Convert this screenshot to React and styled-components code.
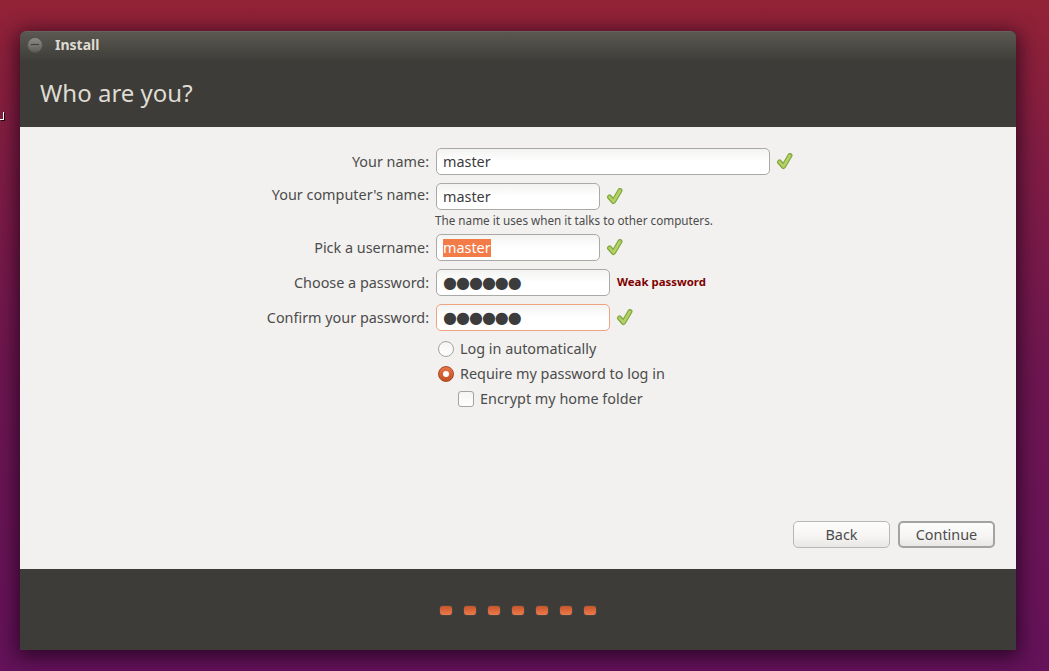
import React from "react";
import styled, { createGlobalStyle } from "styled-components";

const Global = createGlobalStyle`
  html, body { margin: 0; padding: 0; height: 100%; }
  body { font-family: "Noto Sans", "Open Sans", sans-serif; overflow: hidden; }
  * { box-sizing: border-box; }
`;

const Desktop = styled.div`
  position: relative;
  width: 1049px;
  height: 671px;
  padding: 31px 33px 21px 20px;
  background: linear-gradient(180deg, #922236 0%, #7f1c44 25%, #6e1650 55%, #64125a 100%);
`;

const DesktopMark = styled.span`
  position: absolute;
  left: 0;
  top: 112px;
  width: 4px;
  height: 8px;
  border-right: 1px solid #fff;
  border-bottom: 1px solid #fff;
  box-shadow: 1px 1px 0 rgba(0, 0, 0, 0.8);
`;

const Window = styled.div`
  display: flex;
  flex-direction: column;
  height: 619px;
  border-radius: 6px 6px 0 0;
  overflow: hidden;
  box-shadow: 0 4px 20px 3px rgba(20, 0, 20, 0.7);
  background: #3d3c38;
`;

const TitleBar = styled.div`
  display: flex;
  align-items: center;
  gap: 12px;
  height: 29px;
  flex: none;
  padding: 0 0 3px 7px;
  background: linear-gradient(180deg, #5a5850 0%, #3f3e3a 100%);
  border-top: 1px solid #65635b;
`;

const CloseButton = styled.span`
  display: flex;
  align-items: center;
  justify-content: center;
  width: 16px;
  height: 16px;
  border-radius: 50%;
  background: linear-gradient(180deg, #8c8a84, #615f5a);
  border: 1px solid #55544e;
  &::after {
    content: "";
    width: 8px;
    height: 1px;
    background: #3f3e39;
  }
`;

const WindowTitle = styled.span`
  font-size: 14px;
  font-weight: 700;
  color: #dfdbd2;
`;

const Header = styled.header`
  display: flex;
  align-items: center;
  flex: none;
  height: 67px;
  padding: 0 0 2px 20px;
  font-size: 24px;
  color: #dfdbd2;
  background: #3d3c38;
`;

const Page = styled.main`
  position: relative;
  display: flex;
  flex-direction: column;
  flex: 1;
  padding: 21px 21px 21px 0;
  background: #f2f1ef;
  color: #4c4c4c;
  font-size: 14.4px;
`;

const Form = styled.form`
  display: flex;
  flex-direction: column;
  flex: 1;
`;

const Row = styled.div`
  display: flex;
  align-items: center;
  height: 27px;
  margin-bottom: 8px;
`;

const Label = styled.label`
  flex: none;
  width: 409px;
  margin-right: 7px;
  text-align: right;
  position: relative;
  top: ${(p) => p.$lift ?? 0}px;
`;

const Field = styled.div`
  display: flex;
  align-items: center;
  flex: none;
  width: ${(p) => p.$w}px;
  height: 27px;
  padding-left: 6px;
  margin-right: 6px;
  border-radius: 5px;
  border: 1px solid ${(p) => (p.$focus ? "#f0a384" : "#a9a9a5")};
  background: linear-gradient(180deg, #f3f3f2 0%, #ffffff 50%);
  color: #3c3c3c;
`;

const Selected = styled.span`
  background: #f37b48;
  color: #fff;
  line-height: 18px;
`;

const Dots = styled.span`
  font-family: "DejaVu Sans", sans-serif;
  font-size: 16px;
  letter-spacing: -1px;
  color: #3c3c3c;
`;

const Hint = styled.div`
  margin: -8px 0 4px 415px;
  height: 20px;
  line-height: 20px;
  font-size: 11.7px;
`;

const Weak = styled.span`
  margin-left: 1px;
  font-size: 11.4px;
  font-weight: 700;
  color: #7f0000;
  position: relative;
  top: -1px;
`;

const Options = styled.div`
  display: flex;
  flex-direction: column;
  margin: -3px 0 0 418px;
`;

const Option = styled.label`
  display: flex;
  align-items: center;
  gap: 6px;
  height: 25px;
  margin-left: ${(p) => p.$indent ?? 0}px;
`;

const Radio = styled.span`
  display: flex;
  align-items: center;
  justify-content: center;
  width: 16px;
  height: 16px;
  border-radius: 50%;
  border: 1px solid ${(p) => (p.$on ? "#a9461f" : "#a3a3a0")};
  background: ${(p) =>
    p.$on
      ? "linear-gradient(180deg, #e8764a, #c24f22)"
      : "linear-gradient(180deg, #f4f4f3, #ffffff)"};
  &::after {
    content: "";
    display: ${(p) => (p.$on ? "block" : "none")};
    width: 6px;
    height: 6px;
    border-radius: 50%;
    background: #fff;
  }
`;

const Check = styled.span`
  width: 16px;
  height: 16px;
  border-radius: 3px;
  border: 1px solid #a3a3a0;
  background: linear-gradient(180deg, #f4f4f3, #ffffff);
`;

const Actions = styled.div`
  display: flex;
  justify-content: flex-end;
  gap: 8px;
  margin-top: auto;
`;

const Button = styled.button`
  width: 97px;
  height: 27px;
  padding: 0;
  font: inherit;
  color: #4c4c4c;
  border-radius: 5px;
  border: ${(p) => (p.$default ? "2px solid #a3a3a0" : "1px solid #b7b7b4")};
  background: linear-gradient(180deg, #fdfdfc 0%, #f5f4f3 60%, #e8e7e5 100%);
`;

const Footer = styled.footer`
  display: flex;
  align-items: center;
  justify-content: center;
  gap: 12px;
  flex: none;
  height: 81px;
  padding: 2px 0 0;
  background: #3d3c38;
`;

const Dot = styled.span`
  width: 12px;
  height: 9px;
  border-radius: 3px;
  background: linear-gradient(180deg, #c9552a 0%, #ea7b4d 100%);
  box-shadow: 0 0 1px rgba(220, 220, 210, 0.6);
`;

const Tick = () => (
  <svg width="17" height="18" viewBox="0 0 17 18" aria-hidden="true">
    <polyline
      points="3.5,9 7.5,13.5 14,2.5"
      fill="none"
      stroke="#82a63f"
      strokeWidth="5"
      strokeLinejoin="round"
      strokeLinecap="round"
    />
    <polyline
      points="3.5,9 7.5,13.5 14,2.5"
      fill="none"
      stroke="#b2d266"
      strokeWidth="2.6"
      strokeLinejoin="round"
      strokeLinecap="round"
    />
  </svg>
);

export default function App() {
  return (
    <Desktop>
      <Global />
      <DesktopMark />
      <Window>
        <TitleBar>
          <CloseButton />
          <WindowTitle>Install</WindowTitle>
        </TitleBar>
        <Header>Who are you?</Header>
        <Page>
          <Form>
            <Row>
              <Label>Your name:</Label>
              <Field $w={334}>master</Field>
              <Tick />
            </Row>
            <Row>
              <Label $lift={-2}>Your computer's name:</Label>
              <Field $w={164}>master</Field>
              <Tick />
            </Row>
            <Hint>The name it uses when it talks to other computers.</Hint>
            <Row>
              <Label>Pick a username:</Label>
              <Field $w={164}><Selected>master</Selected></Field>
              <Tick />
            </Row>
            <Row>
              <Label>Choose a password:</Label>
              <Field $w={174}><Dots>●●●●●●</Dots></Field>
              <Weak>Weak password</Weak>
            </Row>
            <Row>
              <Label>Confirm your password:</Label>
              <Field $w={174} $focus><Dots>●●●●●●</Dots></Field>
              <Tick />
            </Row>
            <Options>
              <Option><Radio />Log in automatically</Option>
              <Option><Radio $on />Require my password to log in</Option>
              <Option $indent={20}><Check />Encrypt my home folder</Option>
            </Options>
            <Actions>
              <Button type="button">Back</Button>
              <Button type="button" $default>Continue</Button>
            </Actions>
          </Form>
        </Page>
        <Footer>
          {[0, 1, 2, 3, 4, 5, 6].map((i) => <Dot key={i} />)}
        </Footer>
      </Window>
    </Desktop>
  );
}
